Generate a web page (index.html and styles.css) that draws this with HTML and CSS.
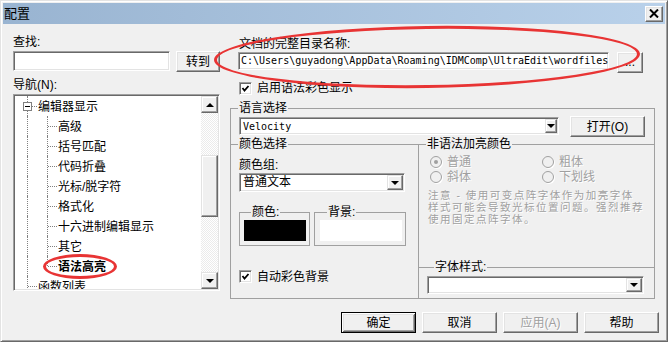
FILE: index.html
```html
<!DOCTYPE html>
<html lang="zh-CN">
<head>
  <meta charset="UTF-8">
  <meta name="viewport" content="width=device-width, initial-scale=1.0">
  <title>配置</title>
  <link rel="stylesheet" href="styles.css">
</head>
<body>
  <div class="window">
    <div class="titlebar">
      <span class="title">配置</span>
      <button class="close" aria-label="关闭">
        <svg width="10" height="9" viewBox="0 0 10 9"><path d="M1 0.5 L9 8.5 M9 0.5 L1 8.5" stroke="#000" stroke-width="2"/></svg>
      </button>
    </div>

    <div class="main">
      <!-- left side: search + navigation tree -->
      <div class="left">
        <div class="label">查找:</div>
        <div class="find-row">
          <input type="text" class="field find">
          <button class="btn go">转到</button>
        </div>
        <div class="label nav">导航(N):</div>
        <div class="tree">
          <ul class="nodes">
            <li class="node"><span class="g tee"><span class="minus"></span></span><span class="text">编辑器显示</span></li>
            <li class="node"><span class="g"></span><span class="g tee"></span><span class="text">高级</span></li>
            <li class="node"><span class="g"></span><span class="g tee"></span><span class="text">括号匹配</span></li>
            <li class="node"><span class="g"></span><span class="g tee"></span><span class="text">代码折叠</span></li>
            <li class="node"><span class="g"></span><span class="g tee"></span><span class="text">光标/脱字符</span></li>
            <li class="node"><span class="g"></span><span class="g tee"></span><span class="text">格式化</span></li>
            <li class="node"><span class="g"></span><span class="g tee"></span><span class="text">十六进制编辑显示</span></li>
            <li class="node"><span class="g"></span><span class="g tee"></span><span class="text">其它</span></li>
            <li class="node"><span class="g"></span><span class="g elbow"></span><span class="text current">语法高亮</span></li>
            <li class="node"><span class="g tee"></span><span class="text">函数列表</span></li>
          </ul>
          <div class="vscroll">
            <div class="sb-btn"><span class="arrow-up"></span></div>
            <div class="sb-track top"></div>
            <div class="sb-thumb"></div>
            <div class="sb-track rest"></div>
            <div class="sb-btn"><span class="arrow-down"></span></div>
          </div>
        </div>
      </div>

      <!-- right side: syntax highlighting settings -->
      <div class="right">
        <div class="label path-label">文档的完整目录名称:</div>
        <div class="path-row">
          <div class="field path">C:\Users\guyadong\AppData\Roaming\IDMComp\UltraEdit\wordfiles</div>
          <button class="btn browse">...</button>
        </div>
        <div class="check-row enable">
          <span class="checkbox"><svg width="9" height="9" viewBox="0 0 9 9"><polyline points="1.5,4 3.5,6.5 7.5,2" fill="none" stroke="#000" stroke-width="1.8"/></svg></span>
          <span>启用语法彩色显示</span>
        </div>

        <fieldset class="group lang">
          <legend>语言选择</legend>
          <div class="lang-row">
            <div class="combo velocity">
              <span class="combo-text mono">Velocity</span>
              <span class="drop"><span class="arrow-down"></span></span>
            </div>
            <button class="btn open">打开(O)</button>
          </div>

          <div class="split">
            <fieldset class="group color">
              <legend>颜色选择</legend>
              <div class="pad">
                <div class="label c-label">颜色组:</div>
                <div class="combo scheme">
                  <span class="combo-text">普通文本</span>
                  <span class="drop"><span class="arrow-down"></span></span>
                </div>
                <div class="swatches">
                  <fieldset class="group swatch-box fg">
                    <legend>颜色:</legend>
                    <div class="swatch black"></div>
                  </fieldset>
                  <fieldset class="group swatch-box bg">
                    <legend>背景:</legend>
                    <div class="swatch white"></div>
                  </fieldset>
                </div>
                <div class="check-row auto">
                  <span class="checkbox"><svg width="9" height="9" viewBox="0 0 9 9"><polyline points="1.5,4 3.5,6.5 7.5,2" fill="none" stroke="#000" stroke-width="1.8"/></svg></span>
                  <span>自动彩色背景</span>
                </div>
              </div>
            </fieldset>

            <fieldset class="group plain">
              <legend>非语法加亮颜色</legend>
              <div class="radios">
                <label class="radio"><span class="dot checked"></span>普通</label>
                <label class="radio"><span class="dot"></span>粗体</label>
                <label class="radio"><span class="dot"></span>斜体</label>
                <label class="radio"><span class="dot"></span>下划线</label>
              </div>
              <p class="note">注意 - 使用可变点阵字体作为加亮字体<br>样式可能会导致光标位置问题。强烈推荐<br>使用固定点阵字体。</p>
              <fieldset class="group font-style">
                <legend>字体样式:</legend>
                <div class="combo style-combo">
                  <span class="combo-text"></span>
                  <span class="drop"><span class="arrow-down"></span></span>
                </div>
              </fieldset>
            </fieldset>
          </div>
        </fieldset>
      </div>
    </div>

    <div class="footer">
      <button class="btn action default">确定</button>
      <button class="btn action">取消</button>
      <button class="btn action disabled">应用(A)</button>
      <button class="btn action">帮助</button>
    </div>

    <!-- red annotation marks drawn over the dialog -->
    <div class="mark mark-path"></div>
    <div class="mark mark-item"></div>
  </div>
</body>
</html>
```

FILE: styles.css
```css
* {
  box-sizing: border-box;
}
html, body {
  margin: 0;
}
body {
  width: 668px;
  height: 342px;
  background: #f0f0f0;
  color: #000;
  font: 12px/14px "Liberation Sans", "Noto Sans CJK SC", sans-serif;
}
button, input {
  font: inherit;
  color: inherit;
  margin: 0;
  padding: 0;
}

.window {
  position: relative;
  width: 668px;
  height: 342px;
  padding: 2px;
  background: #f0f0f0;
  border: 1px solid;
  border-color: #e3e3e3 #696969 #696969 #e3e3e3;
  box-shadow: inset 1px 1px #fff, inset -1px -1px #a0a0a0;
  overflow: hidden;
}

/* title bar */
.titlebar {
  height: 21px;
  display: flex;
  align-items: center;
  justify-content: space-between;
  padding-left: 1px;
  background: linear-gradient(to right, #99b4d1, #b9d1ea);
}
.title {
  font-size: 13px;
  line-height: 16px;
}
.close {
  width: 18px;
  height: 16px;
  margin-right: 2px;
  display: flex;
  align-items: center;
  justify-content: center;
  background: #f0f0f0;
  border: 1px solid;
  border-color: #fff #696969 #696969 #fff;
  box-shadow: inset -1px -1px #a0a0a0, inset 1px 1px #e3e3e3;
}

/* shared controls */
.btn {
  display: flex;
  align-items: center;
  justify-content: center;
  height: 21px;
  background: #f0f0f0;
  border: 1px solid;
  border-color: #fff #696969 #696969 #fff;
  box-shadow: inset -1px -1px #a0a0a0, inset 1px 1px #e3e3e3;
  cursor: pointer;
}
.field {
  background: #fff;
  border: 1px solid;
  border-color: #a0a0a0 #fff #fff #a0a0a0;
  box-shadow: inset 1px 1px #696969, inset -1px -1px #e3e3e3;
  outline: none;
}
.label {
  height: 14px;
  line-height: 14px;
  white-space: nowrap;
}
.mono {
  font-family: "DejaVu Sans Mono", "Liberation Mono", monospace;
  font-size: 10px;
}

.main {
  display: flex;
  gap: 10px;
  padding: 11px 0 0 10px;
}

/* left column */
.left {
  width: 207px;
  flex: none;
}
.find-row {
  display: flex;
  align-items: flex-start;
  gap: 6px;
  margin-top: 2px;
}
.find {
  width: 157px;
  height: 20px;
}
.go {
  width: 44px;
}
.nav {
  margin-top: 6px;
}

.tree {
  display: flex;
  height: 197px;
  margin-top: 2px;
  padding: 1px;
  background: #fff;
  border: 1px solid;
  border-color: #a0a0a0 #fff #fff #a0a0a0;
  box-shadow: inset 1px 1px #696969, inset -1px -1px #e3e3e3;
}
.nodes {
  flex: 1;
  margin: 0;
  padding: 0 0 0 2px;
  list-style: none;
  overflow: hidden;
}
.node {
  display: flex;
  align-items: center;
  height: 20px;
  white-space: nowrap;
}
.g {
  position: relative;
  flex: none;
  width: 20px;
  height: 20px;
}
.g::before {
  content: "";
  position: absolute;
  left: 10px;
  top: 0;
  bottom: 0;
  border-left: 1px dotted #808080;
}
.g.elbow::before {
  bottom: 10px;
}
.g.tee::after,
.g.elbow::after {
  content: "";
  position: absolute;
  left: 11px;
  right: 0;
  top: 10px;
  border-top: 1px dotted #808080;
}
.minus {
  position: absolute;
  left: 6px;
  top: 6px;
  width: 9px;
  height: 9px;
  z-index: 1;
  background: #fff;
  border: 1px solid #808080;
}
.minus::after {
  content: "";
  position: absolute;
  left: 1px;
  right: 1px;
  top: 3px;
  height: 1px;
  background: #000;
}
.text {
  padding-left: 1px;
  padding-top: 1px;
}
.text.current {
  font-weight: bold;
}

.vscroll {
  width: 17px;
  flex: none;
  display: flex;
  flex-direction: column;
}
.sb-btn,
.sb-thumb {
  background: #f0f0f0;
  border: 1px solid;
  border-color: #e3e3e3 #696969 #696969 #e3e3e3;
  box-shadow: inset -1px -1px #a0a0a0, inset 1px 1px #fff;
}
.sb-btn {
  height: 17px;
  display: flex;
  align-items: center;
  justify-content: center;
}
.sb-track {
  background: repeating-conic-gradient(#fff 0 25%, #ebebeb 0 50%) 0 0 / 2px 2px;
}
.sb-track.top {
  height: 42px;
}
.sb-thumb {
  height: 62px;
}
.sb-track.rest {
  flex: 1;
}
.arrow-up,
.arrow-down {
  width: 0;
  height: 0;
  border-left: 4px solid transparent;
  border-right: 4px solid transparent;
}
.arrow-up {
  border-bottom: 4px solid #000;
}
.arrow-down {
  border-top: 4px solid #000;
}

/* right column */
.right {
  width: 425px;
  flex: none;
}
.path-label {
  margin-top: 2px;
  padding-left: 9px;
}
.path-row {
  display: flex;
  align-items: flex-start;
  gap: 8px;
  margin-top: 1px;
  padding-left: 8px;
}
.path {
  width: 371px;
  height: 18px;
  padding: 0 0 0 2px;
  overflow: hidden;
  white-space: nowrap;
  font-family: "DejaVu Sans Mono", "Liberation Mono", monospace;
  font-size: 10px;
  line-height: 16px;
}
.browse {
  width: 26px;
  line-height: 10px;
  align-items: flex-end;
  padding-bottom: 5px;
}

.check-row {
  display: flex;
  align-items: center;
  gap: 5px;
  height: 14px;
}
.check-row.enable {
  margin-top: 8px;
  padding-left: 9px;
}
.checkbox {
  width: 13px;
  height: 13px;
  flex: none;
  display: flex;
  align-items: center;
  justify-content: center;
  background: #fff;
  border: 1px solid;
  border-color: #a0a0a0 #fff #fff #a0a0a0;
  box-shadow: inset 1px 1px #696969, inset -1px -1px #e3e3e3;
}

/* group boxes */
.group {
  margin: 0;
  padding: 0;
  min-width: 0;
  border: 1px solid #a0a0a0;
}
.group > legend {
  margin-left: 7px;
  padding: 0 1px;
  line-height: 14px;
  white-space: nowrap;
}
.lang {
  width: 425px;
  margin-top: 6px;
}
.lang-row {
  display: flex;
  align-items: flex-start;
  gap: 11px;
  margin-top: 1px;
  padding-left: 8px;
}

.combo {
  display: flex;
  align-items: stretch;
  padding: 1px;
  background: #fff;
  border: 1px solid;
  border-color: #a0a0a0 #fff #fff #a0a0a0;
  box-shadow: inset 1px 1px #696969, inset -1px -1px #e3e3e3;
}
.combo-text {
  flex: 1;
  padding-left: 2px;
  line-height: 15px;
  white-space: nowrap;
}
.drop {
  width: 16px;
  flex: none;
  display: flex;
  align-items: center;
  justify-content: center;
  background: #f0f0f0;
  border: 1px solid;
  border-color: #e3e3e3 #696969 #696969 #e3e3e3;
  box-shadow: inset -1px -1px #a0a0a0, inset 1px 1px #fff;
}
.velocity {
  width: 320px;
  height: 18px;
  margin-top: 1px;
}
.velocity .drop {
  width: 12px;
}
.open {
  width: 75px;
}

.split {
  display: flex;
}
.color {
  width: 188px;
  flex: none;
  border-width: 1px 1px 0 0;
}
.pad {
  padding: 0 0 15px 8px;
}
.c-label {
  margin-top: 7px;
}
.scheme {
  width: 166px;
  height: 19px;
  margin-top: 1px;
}
.swatches {
  display: flex;
  gap: 4px;
  margin-top: 13px;
}
.swatch-box {
  padding: 1px 3px 4px 4px;
}
.swatch-box.fg {
  width: 71px;
}
.swatch-box.bg {
  width: 92px;
  padding-left: 5px;
}
.swatch {
  height: 21px;
}
.swatch.black {
  background: #000;
}
.swatch.white {
  background: #fff;
}
.check-row.auto {
  height: 13px;
  margin-top: 24px;
}

.plain {
  flex: 1;
  display: flex;
  flex-direction: column;
  border-width: 1px 0 0 0;
}
.radios {
  display: grid;
  grid-template-columns: 112px 1fr;
  margin-top: 3px;
  padding-left: 11px;
  color: #a0a0a0;
}
.radio {
  display: flex;
  align-items: center;
  gap: 5px;
  height: 15px;
  text-shadow: 1px 1px #fff;
}
.dot {
  position: relative;
  width: 12px;
  height: 12px;
  border-radius: 50%;
  border: 1px solid #a0a0a0;
  background: #f0f0f0;
  box-shadow: 1px 1px #fff;
}
.dot.checked::after {
  content: "";
  position: absolute;
  left: 3px;
  top: 3px;
  width: 4px;
  height: 4px;
  border-radius: 50%;
  background: #a0a0a0;
}
.note {
  margin: 6px 0 0 9px;
  color: #a0a0a0;
  font-size: 10.5px;
  letter-spacing: 1.5px;
  line-height: 11.75px;
  text-shadow: 1px 1px #fff;
  white-space: nowrap;
}
.font-style {
  margin-top: auto;
  border-width: 1px 0 0 0;
  padding: 2px 10px 4px 8px;
}
.style-combo {
  height: 18px;
}

/* footer buttons */
.footer {
  display: flex;
  justify-content: flex-end;
  gap: 6px;
  margin-top: 13px;
  padding-right: 6px;
}
.action {
  width: 75px;
}
.action.default {
  border-color: #000;
  box-shadow: inset 1px 1px #fff, inset -1px -1px #696969, inset 2px 2px #e3e3e3, inset -2px -2px #a0a0a0;
}
.action.disabled {
  color: #a0a0a0;
  text-shadow: 1px 1px #fff;
}

/* red hand-drawn marks */
.mark {
  position: absolute;
  border: 3px solid #e83434;
  border-radius: 50%;
  pointer-events: none;
}
.mark-path {
  left: 213px;
  top: 25px;
  width: 426px;
  height: 62px;
  transform: rotate(-0.8deg);
}
.mark-item {
  left: 42px;
  top: 253px;
  width: 74px;
  height: 25px;
}
```
